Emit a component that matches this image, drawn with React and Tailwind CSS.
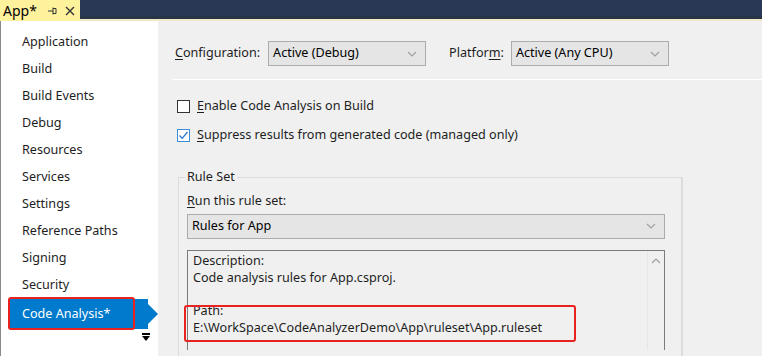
import React from 'react';

const font = { fontFamily: '"Noto Sans", "Liberation Sans", sans-serif' };

const navItems = [
  'Application',
  'Build',
  'Build Events',
  'Debug',
  'Resources',
  'Services',
  'Settings',
  'Reference Paths',
  'Signing',
  'Security',
];

const Chevron = ({ up }) => (
  <svg width="10" height="6" viewBox="0 0 10 6" className="shrink-0">
    <polyline
      points={up ? '1,5 5,1 9,5' : '1,1 5,5 9,1'}
      fill="none"
      stroke="#a0a0a0"
      strokeWidth="1.2"
    />
  </svg>
);

const Select = ({ value, className }) => (
  <div
    className={`flex items-center justify-between h-[25px] pl-[4px] pr-[8px] bg-[#e5e5e5] border border-[#acacac] text-[#000] ${className}`}
  >
    <span>{value}</span>
    <Chevron />
  </div>
);

const Checkbox = ({ checked, u, rest }) => (
  <div className="flex items-center gap-[7px] h-[16px]">
    <div
      className={`w-[13px] h-[13px] bg-white border flex items-center justify-center ${
        checked ? 'border-[#3b8fd9]' : 'border-[#333]'
      }`}
    >
      {checked && (
        <svg width="11" height="11" viewBox="0 0 11 11">
          <polyline points="1.5,5.5 4.2,8.3 9.5,2" fill="none" stroke="#2a7ad2" strokeWidth="1.3" />
        </svg>
      )}
    </div>
    <span>
      <span className="underline underline-offset-2">{u}</span>
      {rest}
    </span>
  </div>
);

export default function App() {
  return (
    <div className="w-[762px] h-[356px] overflow-hidden flex flex-col text-[12.6px] text-[#1e1e1e] bg-[#f0f0f0]" style={font}>
      {/* tab strip */}
      <div className="h-[21px] bg-[#293955] flex shrink-0">
        <div className="w-[80px] h-[21px] bg-[#fff29d] flex items-center pl-[3px] text-[14px] text-black">
          <span>App*</span>
          <svg width="12" height="12" viewBox="0 0 12 12" className="ml-[9px]">
            <path d="M2 6h5M7 2.5v7M7 3.5h3v5H7" fill="none" stroke="#333" strokeWidth="1" />
          </svg>
          <svg width="10" height="10" viewBox="0 0 10 10" className="ml-[7px]">
            <path d="M1 1l8 8M9 1l-8 8" stroke="#333" strokeWidth="1.4" />
          </svg>
        </div>
        <div className="flex-1 flex flex-col justify-end">
          <div className="h-[3px] bg-[#2a3447]" />
          <div className="h-[2px] bg-[#eeeac8]" />
        </div>
      </div>

      <div className="flex flex-1 min-h-0">
        {/* sidebar */}
        <div className="w-[158px] shrink-0 bg-white border-l border-[#8a8a8a] relative">
          <div className="pt-[8px] flex flex-col">
            {navItems.map((item) => (
              <div key={item} className="h-[27px] flex items-center pl-[21px]">
                {item}
              </div>
            ))}
            <div className="relative h-[30px] ml-[9px] mr-[10px] bg-[#007acc] text-white flex items-center pl-[12px]">
              Code Analysis*
              <div className="absolute right-[-10px] top-[5px] w-0 h-0 border-y-[10px] border-y-transparent border-l-[10px] border-l-[#007acc]" />
              <div className="absolute left-[-2px] top-[-2px] w-[127px] h-[33px] border-2 border-[#e8221f] rounded-[3px]" />
            </div>
            <div className="flex flex-col items-center w-[8px] ml-[141px] mt-[4px]">
              <div className="w-[8px] h-[2px] bg-black" />
              <div className="w-0 h-0 border-x-[4px] border-x-transparent border-t-[5px] border-t-black mt-[1px]" />
            </div>
          </div>
        </div>

        {/* content */}
        <div className="flex-1 pl-[17px] pt-[20px]">
          <div className="flex items-center h-[25px]">
            <span className="mr-[8px]">
              <span className="underline underline-offset-2">C</span>onfiguration:
            </span>
            <Select value="Active (Debug)" className="w-[158px]" />
            <span className="ml-[23px] mr-[7px]">
              Platfor<span className="underline underline-offset-2">m</span>:
            </span>
            <Select value="Active (Any CPU)" className="w-[158px]" />
          </div>
          <div className="h-[1px] bg-[#a0a0a0] mt-[13px] -ml-[3px] border-b border-white" />

          <div className="pl-[2px] mt-[18px] flex flex-col gap-[13px]">
            <Checkbox u="E" rest="nable Code Analysis on Build" />
            <Checkbox checked u="S" rest="uppress results from generated code (managed only)" />
          </div>

          {/* group box */}
          <div className="relative mt-[34px] ml-[3px] w-[505px] h-[200px] border-l border-t border-r-2 border-[#dcdcdc] pl-[8px] pt-[12px]">
            <div className="absolute left-[6px] top-[-9px] bg-[#f0f0f0] px-[2px] leading-[16px]">Rule Set</div>
            <div className="mt-[2px]">
              <span className="underline underline-offset-2">R</span>un this rule set:
            </div>
            <Select value="Rules for App" className="w-[478px] mt-[3px]" />
            <div className="relative w-[478px] h-[100px] mt-[11px] border border-[#7a7a7a] border-b-0 bg-[#f0f0f0] flex">
              <div className="flex-1 pl-[5px] pt-[2px] leading-[16.8px]">
                <div>Description:</div>
                <div>Code analysis rules for App.csproj.</div>
                <div className="h-[16.8px]" />
                <div>Path:</div>
                <div>E:\WorkSpace\CodeAnalyzerDemo\App\ruleset\App.ruleset</div>
              </div>
              <div className="w-[17px] border-l border-[#e6e6e6] flex justify-center pt-[7px]">
                <Chevron up />
              </div>
              <div className="absolute left-[-4px] top-[54px] w-[392px] h-[37px] border-2 border-[#e8221f] rounded-[3px]" />
            </div>
          </div>
        </div>
      </div>
    </div>
  );
}
